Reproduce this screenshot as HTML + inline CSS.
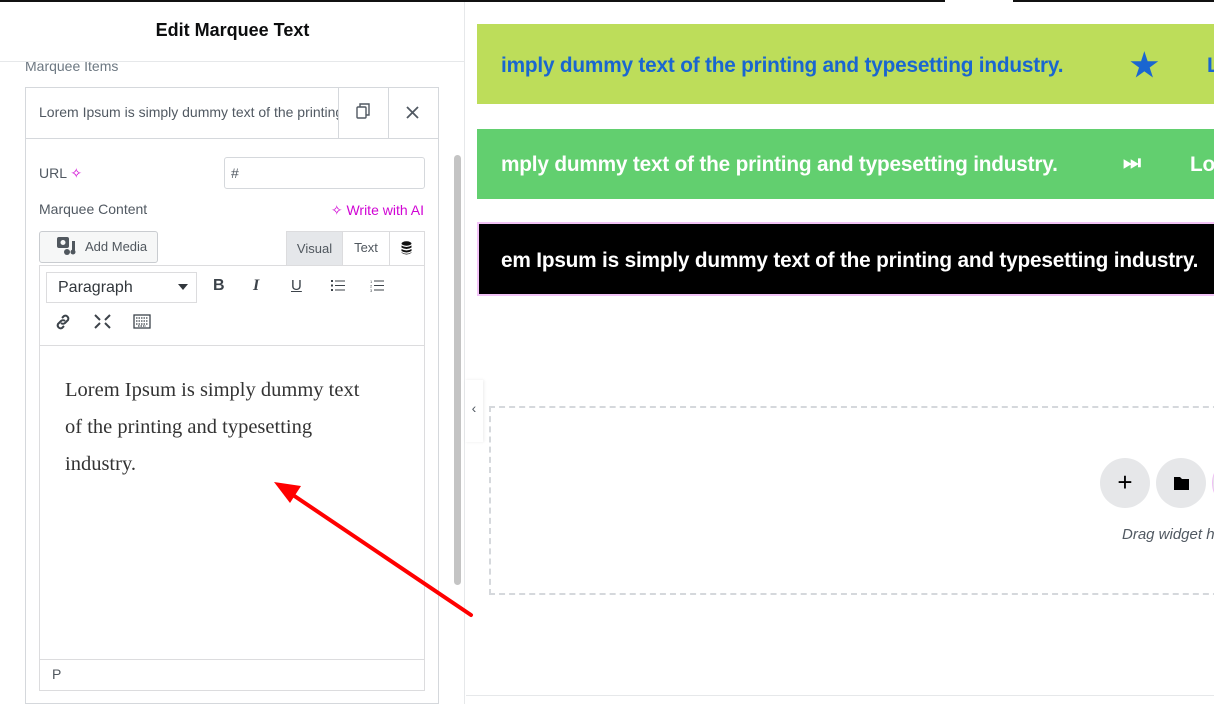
<!DOCTYPE html>
<html><head><meta charset="utf-8"><style>
*{box-sizing:border-box;margin:0;padding:0}
body{width:1214px;height:704px;overflow:hidden;background:#fff;font-family:"Liberation Sans",sans-serif;position:relative;color:#515962}
.a{position:absolute}
.mq{position:absolute;left:477px;right:0;overflow:hidden;white-space:nowrap;font-weight:bold;font-size:20.8px;letter-spacing:-0.2px}
</style></head><body>
<div class="a" style="left:0;top:0;width:1214px;height:2px;background:#111"></div>
<div class="a" style="left:945px;top:0;width:68px;height:2px;background:#fff"></div>
<!-- panel -->
<div class="a" style="left:0;top:2px;width:465px;height:702px;background:#fff;border-right:1px solid #e6e8ea"></div>
<div class="a" style="left:0;top:20px;width:465px;text-align:center;font-weight:bold;font-size:18px;color:#0c0d0e">Edit Marquee Text</div>
<div class="a" style="left:0;top:61px;width:464px;height:1px;background:#e6e8ea"></div>
<div class="a" style="left:25px;top:62px;width:420px;height:14px;overflow:hidden"><div style="margin-top:-4px;font-size:14px;color:#6d7882">Marquee Items</div></div>
<div class="a" style="left:25px;top:87px;width:414px;height:617px;border:1px solid #d5d8dc"></div>
<div class="a" style="left:26px;top:138px;width:412px;height:1px;background:#d5d8dc"></div>
<div class="a" style="left:39px;top:104px;width:299px;overflow:hidden;white-space:nowrap;font-size:14px;color:#515962">Lorem Ipsum is simply dummy text of the printing</div>
<div class="a" style="left:338px;top:88px;width:1px;height:50px;background:#d5d8dc"></div>
<div class="a" style="left:388px;top:88px;width:1px;height:50px;background:#d5d8dc"></div>
<svg class="a" style="left:356px;top:103px" width="15" height="16" viewBox="0 0 15 16" fill="none" stroke="#515962" stroke-width="1.4"><rect x="1" y="4" width="9" height="11" rx="1"/><path d="M4 4V1h9v11h-3"/></svg>
<svg class="a" style="left:406px;top:106px" width="13" height="13" viewBox="0 0 13 13" stroke="#515962" stroke-width="1.8"><path d="M1 1l11 11M12 1L1 12"/></svg>
<div class="a" style="left:39px;top:165px;font-size:14px">URL <span style="color:#d004d4">✧</span></div>
<div class="a" style="left:224px;top:157px;width:201px;height:32px;border:1px solid #d5d8dc;border-radius:3px;font-size:14px;padding:7px 6px;color:#515962">#</div>
<div class="a" style="left:39px;top:201px;font-size:14px">Marquee Content</div>
<div class="a" style="right:790px;top:202px;font-size:14px;color:#d004d4">✧ Write with AI</div>
<div class="a" style="left:39px;top:231px;width:119px;height:32px;border:1px solid #c9ccd0;border-radius:3px;background:#f6f7f7;font-size:13px;padding:7px 0 0 45px;color:#50575e">Add Media</div>
<svg class="a" style="left:56px;top:236px" width="22" height="20" viewBox="0 0 22 20" fill="#50575e"><rect x="1" y="1" width="12" height="11" rx="2"/><circle cx="7" cy="6.5" r="2.5" fill="#f6f7f7"/><rect x="16" y="5" width="3" height="11"/><circle cx="11" cy="16" r="3"/><circle cx="17" cy="16" r="2.5"/></svg>
<div class="a" style="left:286px;top:231px;width:139px;height:35px;border:1px solid #dcdcde;border-bottom:none;background:#f6f7f7"></div>
<div class="a" style="left:286px;top:231px;width:57px;height:35px;background:#e5e7ea;border:1px solid #dcdcde;border-bottom:none;font-size:13px;text-align:center;padding-top:9px;color:#50575e">Visual</div>
<div class="a" style="left:343px;top:232px;width:47px;height:34px;background:#fff;border-right:1px solid #dcdcde;font-size:13px;text-align:center;padding-top:8px;color:#50575e">Text</div>
<div class="a" style="left:390px;top:232px;width:34px;height:34px;background:#fff"></div>
<svg class="a" style="left:401px;top:241px" width="11" height="14" viewBox="0 0 11 14" fill="#111"><ellipse cx="5.5" cy="2.5" rx="5" ry="2.2"/><path d="M.5 4.5q5 3 10 0v2q-5 3-10 0zM.5 8q5 3 10 0v2q-5 3-10 0zM.5 11.3q5 3 10 0v.5q-5 3.5-10 0z"/></svg>
<div class="a" style="left:39px;top:265px;width:386px;height:426px;border:1px solid #dcdcde"></div>
<div class="a" style="left:40px;top:266px;width:384px;height:80px;background:#fff;border-bottom:1px solid #dcdcde"></div>
<div class="a" style="left:46px;top:272px;width:151px;height:31px;border:1px solid #dcdcde;font-size:16px;padding:6px 11px;color:#32373c">Paragraph<span style="position:absolute;right:8px;top:11px;width:0;height:0;border-left:5px solid transparent;border-right:5px solid transparent;border-top:6px solid #32373c"></span></div>
<div class="a" style="left:213px;top:277px;font-size:16px;font-weight:bold;color:#3c434a">B</div>
<div class="a" style="left:253px;top:277px;font-size:16px;font-style:italic;font-family:'Liberation Serif',serif;font-weight:bold;color:#3c434a">I</div>
<div class="a" style="left:291px;top:277px;font-size:15px;text-decoration:underline;color:#3c434a">U</div>
<svg class="a" style="left:331px;top:279px" width="14" height="13" viewBox="0 0 14 13" fill="#3c434a"><rect x="0" y="1" width="2" height="2"/><rect x="0" y="5.5" width="2" height="2"/><rect x="0" y="10" width="2" height="2"/><rect x="4" y="1.5" width="10" height="1"/><rect x="4" y="6" width="10" height="1"/><rect x="4" y="10.5" width="10" height="1"/></svg>
<svg class="a" style="left:370px;top:279px" width="14" height="13" viewBox="0 0 14 13" fill="#3c434a"><text x="0" y="4" font-size="4">1</text><text x="0" y="8.5" font-size="4">2</text><text x="0" y="13" font-size="4">3</text><rect x="4" y="1.5" width="10" height="1"/><rect x="4" y="6" width="10" height="1"/><rect x="4" y="10.5" width="10" height="1"/></svg>
<svg class="a" style="left:54px;top:313px" width="18" height="18" viewBox="0 0 18 18" fill="none" stroke="#3c434a" stroke-width="2"><path d="M8 5l2-2a3 3 0 014 4l-3 3a3 3 0 01-4 0M10 13l-2 2a3 3 0 01-4-4l3-3a3 3 0 014 0"/></svg>
<svg class="a" style="left:94px;top:314px" width="17" height="15" viewBox="0 0 17 15" fill="none" stroke="#3c434a" stroke-width="2"><path d="M1 1l5 5M16 1l-5 5M1 14l5-5M16 14l-5-5"/></svg>
<svg class="a" style="left:133px;top:314px" width="18" height="15" viewBox="0 0 18 15" fill="none" stroke="#3c434a" stroke-width="1.3"><rect x="1" y="1" width="16" height="13"/><path d="M3 4h12M3 7h12M3 10h12M5 12h8" stroke-dasharray="1.5 1"/></svg>
<div class="a" style="left:65px;top:372px;width:300px;font-family:'Liberation Serif',serif;font-size:20.5px;line-height:37px;color:#333">Lorem Ipsum is simply dummy text of the printing and typesetting industry.</div>
<div class="a" style="left:40px;top:659px;width:384px;height:1px;background:#dcdcde"></div>
<div class="a" style="left:52px;top:666px;font-size:14px;color:#50575e">P</div>
<div class="a" style="left:454px;top:155px;width:7px;height:430px;border-radius:4px;background:#c4c4c4"></div>
<div class="a" style="left:465px;top:380px;width:18px;height:62px;background:#fff;box-shadow:1px 0 3px rgba(0,0,0,.08);font-size:14px;text-align:center;padding-top:20px;color:#515962">‹</div>
<!-- marquees -->
<div class="mq" style="top:24px;height:80px;background:#bddd5a;color:#1a66d0;padding:30px 0 0 24px">imply dummy text of the printing and typesetting industry.<span class="a" style="left:653px;top:22px;font-size:32px">★</span><span class="a" style="left:730px;top:30px">Lorem</span></div>
<div class="mq" style="top:129px;height:70px;background:#62cf6f;color:#fff;padding:24px 0 0 24px">mply dummy text of the printing and typesetting industry.<span class="a" style="left:646px;top:23px;font-size:20px">⏭</span><span class="a" style="left:713px;top:24px">Lorem</span></div>
<div class="mq" style="top:222px;height:74px;background:#000;color:#fff;border:2px solid #f2c3f7;border-right:none;padding:25px 0 0 22px">em Ipsum is simply dummy text of the printing and typesetting industry.</div>
<!-- drop area -->
<div class="a" style="left:489px;top:406px;width:740px;height:189px;border:2px dashed #d5d8dc"></div>
<div class="a" style="left:1100px;top:458px;width:50px;height:50px;border-radius:50%;background:#e6e7e9;text-align:center;font-size:26px;line-height:48px;color:#000">+</div>
<div class="a" style="left:1156px;top:458px;width:50px;height:50px;border-radius:50%;background:#e6e7e9"></div>
<svg class="a" style="left:1173px;top:475px" width="17" height="16" viewBox="0 0 17 16" fill="#000"><path d="M1 2h6l2 2h7v11H1z"/></svg>
<div class="a" style="left:1212px;top:458px;width:50px;height:50px;border-radius:50%;background:#e6e7e9;border:1px solid #f0c0f5"></div>
<div class="a" style="left:1122px;top:526px;font-size:15px;font-style:italic;color:#515962;white-space:nowrap">Drag widget here</div>
<div class="a" style="left:466px;top:695px;width:748px;height:1px;background:#e6e8ea"></div>
<!-- arrow -->
<svg class="a" style="left:0;top:0" width="1214" height="704"><line x1="471" y1="615" x2="290" y2="493" stroke="#f00" stroke-width="4" stroke-linecap="round"/><polygon points="274,482 301,486 290,503" fill="#f00"/></svg>
</body></html>
